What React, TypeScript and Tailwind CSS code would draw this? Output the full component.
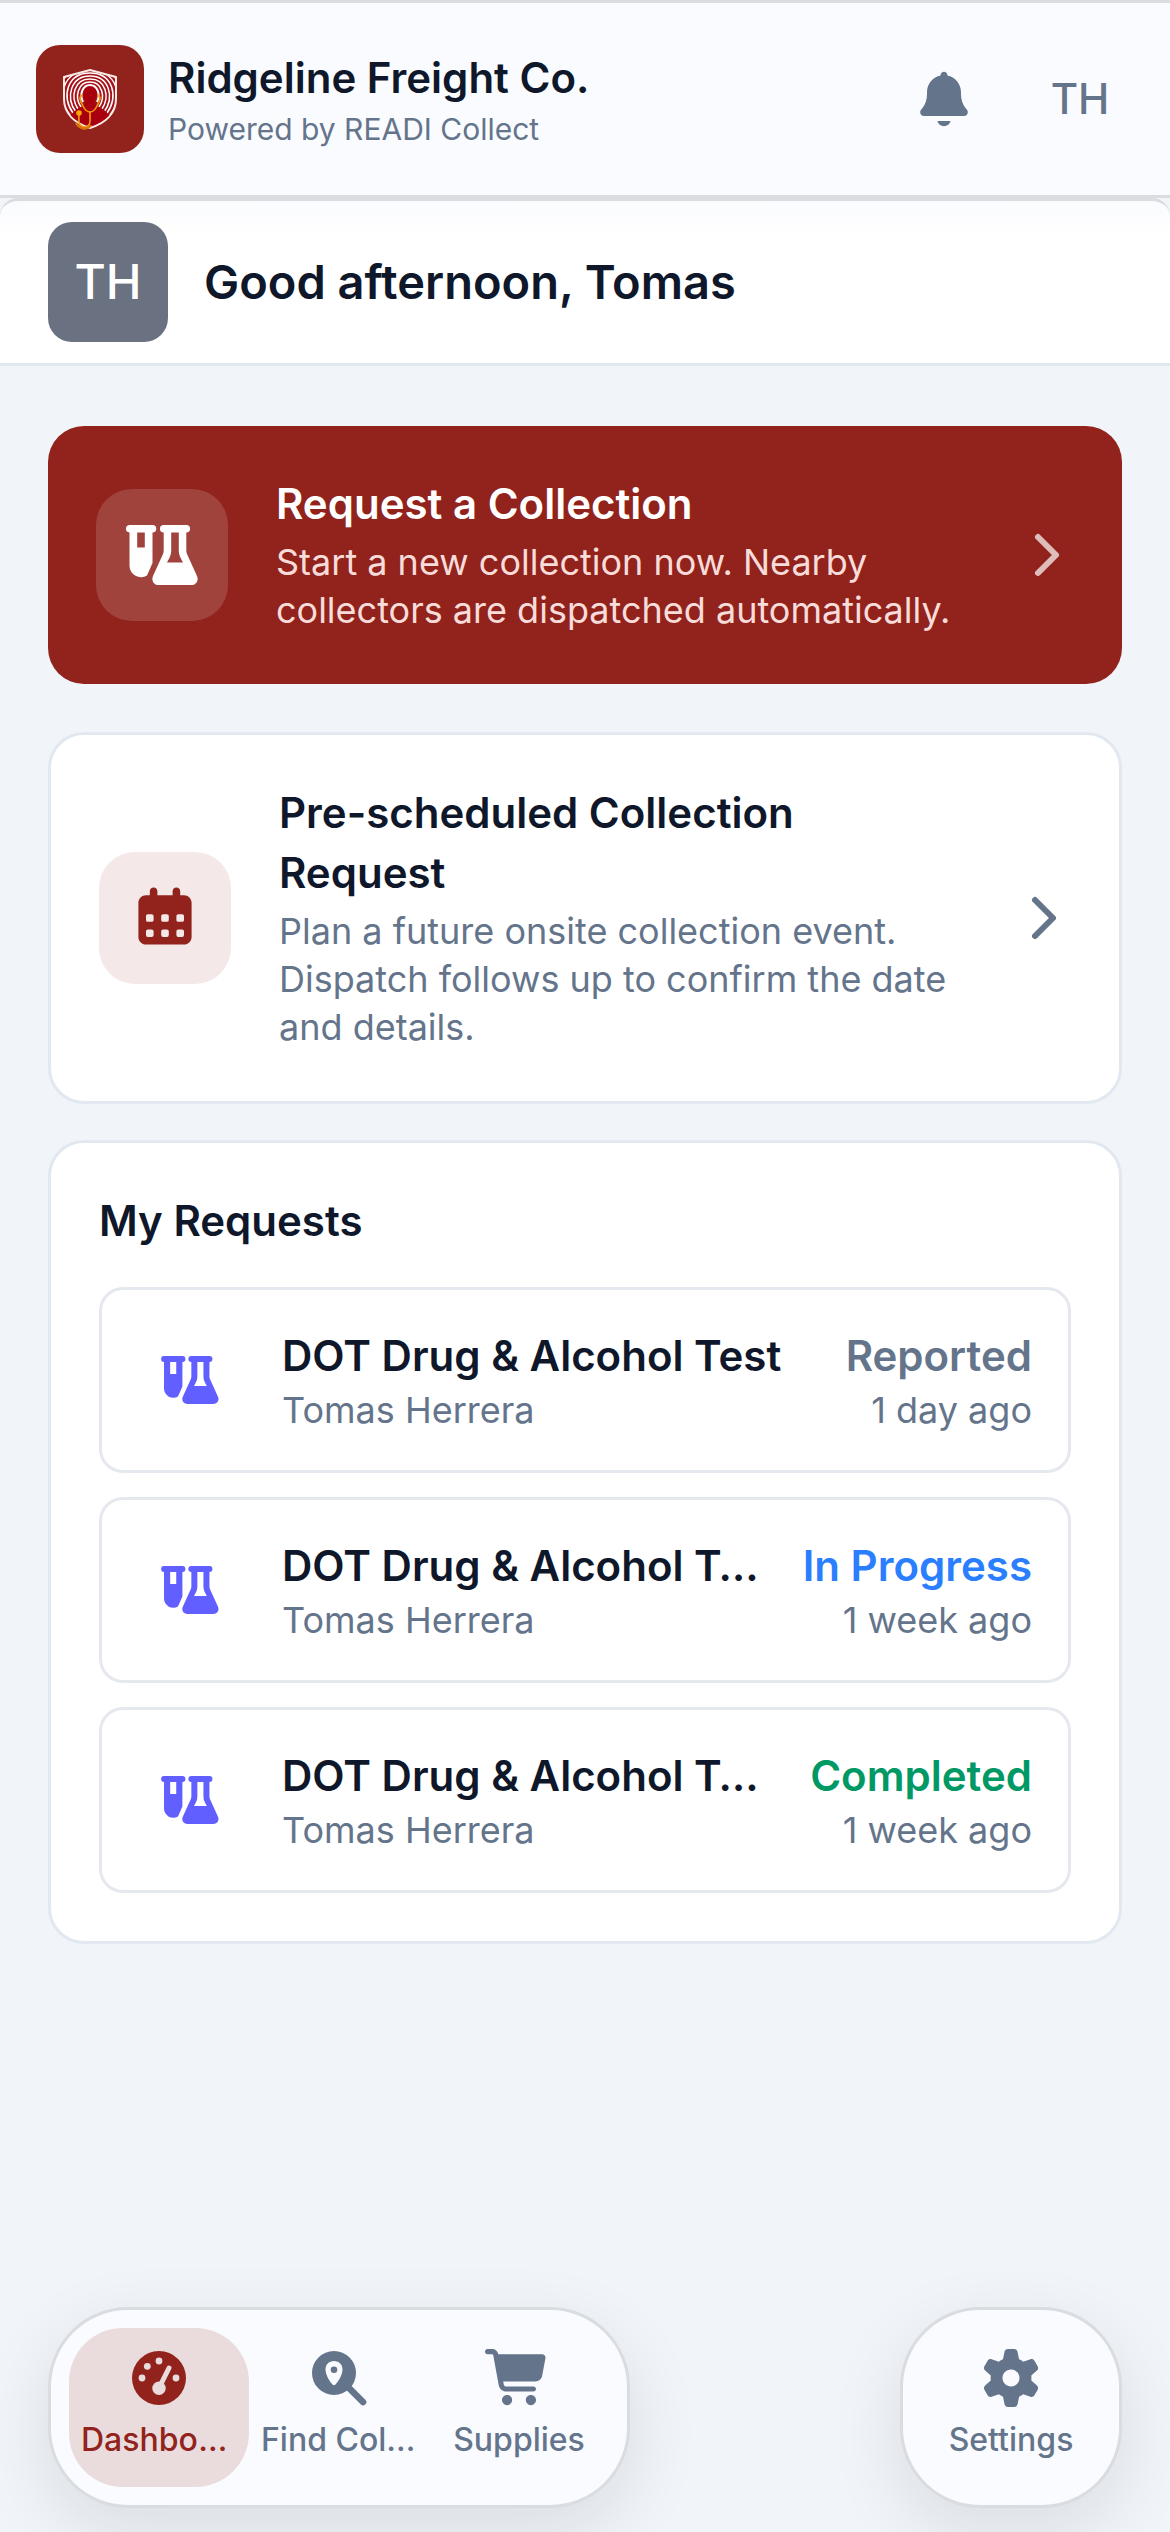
import { ReactNode } from "react";

interface IconProps {
  className?: string;
}

interface ActionCardProps {
  title: string;
  description: string;
  icon: ReactNode;
  primary?: boolean;
}

interface CollectionRequest {
  id: number;
  test: string;
  donor: string;
  status: string;
  statusColor: string;
  time: string;
}

interface NavItemProps {
  label: string;
  icon: ReactNode;
  active?: boolean;
}

const requests: CollectionRequest[] = [
  {
    id: 1,
    test: "DOT Drug & Alcohol Test",
    donor: "Tomas Herrera",
    status: "Reported",
    statusColor: "text-[#64748b]",
    time: "1 day ago",
  },
  {
    id: 2,
    test: "DOT Drug & Alcohol Test",
    donor: "Tomas Herrera",
    status: "In Progress",
    statusColor: "text-[#2b7fff]",
    time: "1 week ago",
  },
  {
    id: 3,
    test: "DOT Drug & Alcohol Test",
    donor: "Tomas Herrera",
    status: "Completed",
    statusColor: "text-[#009966]",
    time: "1 week ago",
  },
];

/* Icons */
const FlaskVialIcon = ({ className }: IconProps) => (
  <svg viewBox="0 0 72 60" fill="currentColor" fillRule="evenodd" className={className}>
    <path d="M3.75 0H26.5a3.75 3.75 0 0 1 0 7.5V38L21 50.5A11.5 11.5 0 0 1 3.5 41V7.5A3.75 3.75 0 0 1 3.75 0ZM11.2 7.5V22.5H18.8V7.5Z" />
    <path d="M37.7 0H60.3a3.75 3.75 0 0 1 0 7.5V25.5C60.3 27 60.6 28 61.2 29.5L71 51C73 55.5 70 60 65.5 60H32.5C28 60 25 55.5 27 51L36.8 29.5C37.4 28 37.7 27 37.7 25.5V7.5A3.75 3.75 0 0 1 37.7 0ZM45.2 7.5V25.5C45.2 28 44.7 30.3 43.6 32.6L41 37.5H57L54.4 32.6C53.3 30.3 52.8 28 52.8 25.5V7.5Z" />
  </svg>
);

const CalendarIcon = ({ className }: IconProps) => (
  <svg viewBox="0 0 640 640" fill="currentColor" className={className}>
    <path
      fillRule="evenodd"
      d="M224 64c17.7 0 32 14.3 32 32v32h128V96c0-17.7 14.3-32 32-32s32 14.3 32 32v32h32c35.3 0 64 28.7 64 64v288c0 35.3-28.7 64-64 64H160c-35.3 0-64-28.7-64-64V192c0-35.3 28.7-64 64-64h32V96c0-17.7 14.3-32 32-32zM176 288a16 16 0 0 0-16 16v32a16 16 0 0 0 16 16h32a16 16 0 0 0 16-16v-32a16 16 0 0 0-16-16zM304 288a16 16 0 0 0-16 16v32a16 16 0 0 0 16 16h32a16 16 0 0 0 16-16v-32a16 16 0 0 0-16-16zM432 288a16 16 0 0 0-16 16v32a16 16 0 0 0 16 16h32a16 16 0 0 0 16-16v-32a16 16 0 0 0-16-16zM176 416a16 16 0 0 0-16 16v32a16 16 0 0 0 16 16h32a16 16 0 0 0 16-16v-32a16 16 0 0 0-16-16zM304 416a16 16 0 0 0-16 16v32a16 16 0 0 0 16 16h32a16 16 0 0 0 16-16v-32a16 16 0 0 0-16-16zM432 416a16 16 0 0 0-16 16v32a16 16 0 0 0 16 16h32a16 16 0 0 0 16-16v-32a16 16 0 0 0-16-16z"
    />
  </svg>
);

const ChevronIcon = ({ className }: IconProps) => (
  <svg viewBox="0 0 54 54" fill="none" stroke="currentColor" className={className}>
    <path d="M18 9 36 27 18 45" strokeWidth="6" strokeLinecap="round" strokeLinejoin="round" />
  </svg>
);

const BellIcon = ({ className }: IconProps) => (
  <svg viewBox="0 0 640 640" fill="currentColor" className={className}>
    <path d="M320 64C302.3 64 288 78.3 288 96L288 99.2C215 114 160 178.6 160 256L160 277.7C160 325.8 143.6 372.5 113.6 410.1L103.8 422.3C98.7 428.6 96 436.4 96 444.5C96 464.1 111.9 480 131.5 480L508.4 480C528 480 543.9 464.1 543.9 444.5C543.9 436.4 541.2 428.6 536.1 422.3L526.3 410.1C496.4 372.5 480 325.8 480 277.7L480 256C480 178.6 425 114 352 99.2L352 96C352 78.3 337.7 64 320 64zM258 528C265.1 555.6 290.2 576 320 576C349.8 576 374.9 555.6 382 528L258 528z" />
  </svg>
);

const GaugeIcon = ({ className }: IconProps) => (
  <svg viewBox="-34 -34 68 68" className={className}>
    <circle r="27" fill="currentColor" />
    <g className="fill-[#eadcdd]">
      <circle cx="-17" r="3.4" />
      <circle cx="17" r="3.4" />
      <circle cy="-17" r="3.4" />
      <circle cx="-11.7" cy="-11.7" r="3.4" />
      <circle cy="10.2" r="6.7" />
    </g>
    <path d="M1 8 10 -10" className="stroke-[#eadcdd]" strokeWidth="5" strokeLinecap="round" />
  </svg>
);

const SearchLocationIcon = ({ className }: IconProps) => (
  <svg viewBox="-29 -29 68 68" fill="currentColor" className={className}>
    <path d="M12 12 29 29" stroke="currentColor" strokeWidth="6.7" strokeLinecap="round" />
    <path
      fillRule="evenodd"
      d="M0-22A22 22 0 1 1 0 22A22 22 0 1 1 0-22ZM0-12C-5-12-8.5-8.5-8.5-3.5C-8.5 2-4 9-1.5 11.5Q0 12.8 1.5 11.5C4 9 8.5 2 8.5-3.5C8.5-8.5 5-12 0-12Z"
    />
    <circle cy="-3.3" r="3.3" />
  </svg>
);

const CartIcon = ({ className }: IconProps) => (
  <svg viewBox="0 0 640 640" fill="currentColor" className={className}>
    <path d="M24 48C10.7 48 0 58.7 0 72C0 85.3 10.7 96 24 96L69.3 96C73.2 96 76.5 98.8 77.2 102.6L129.3 388.9C135.5 423.1 165.3 448 200.1 448L456 448C469.3 448 480 437.3 480 424C480 410.7 469.3 400 456 400L200.1 400C188.5 400 178.6 391.7 176.5 380.3L171.4 352L475 352C505.8 352 532.2 330.1 537.9 299.8L568.9 133.9C572.6 114.2 557.5 96 537.4 96L124.7 96L124.3 94C119.5 67.4 96.3 48 69.2 48L24 48zM208 576C234.5 576 256 554.5 256 528C256 501.5 234.5 480 208 480C181.5 480 160 501.5 160 528C160 554.5 181.5 576 208 576zM432 576C458.5 576 480 554.5 480 528C480 501.5 458.5 480 432 480C405.5 480 384 501.5 384 528C384 554.5 405.5 576 432 576z" />
  </svg>
);

const GearIcon = ({ className }: IconProps) => (
  <svg viewBox="0 0 640 640" fill="currentColor" className={className}>
    <path d="M259.1 73.5C262.1 58.7 275.2 48 290.4 48L350.2 48C365.4 48 378.5 58.7 381.5 73.5L396 143.5C410.1 149.5 423.3 157.2 435.3 166.3L503.1 143.8C517.5 139 533.3 145 540.9 158.2L570.8 210C578.4 223.2 575.7 239.8 564.3 249.9L511 297.3C511.9 304.7 512.3 312.3 512.3 320C512.3 327.7 511.8 335.3 511 342.7L564.4 390.2C575.8 400.3 578.4 417 570.9 430.1L541 481.9C533.4 495 517.6 501.1 503.2 496.3L435.4 473.8C423.3 482.9 410.1 490.5 396.1 496.6L381.7 566.5C378.6 581.4 365.5 592 350.4 592L290.6 592C275.4 592 262.3 581.3 259.3 566.5L244.9 496.6C230.8 490.6 217.7 482.9 205.6 473.8L137.5 496.3C123.1 501.1 107.3 495.1 99.7 481.9L69.8 430.1C62.2 416.9 64.9 400.3 76.3 390.2L129.7 342.7C128.8 335.3 128.4 327.7 128.4 320C128.4 312.3 128.9 304.7 129.7 297.3L76.3 249.8C64.9 239.7 62.3 223 69.8 209.9L99.7 158.1C107.3 144.9 123.1 138.9 137.5 143.7L205.3 166.2C217.4 157.1 230.6 149.5 244.6 143.4L259.1 73.5zM320.3 400C364.5 399.8 400.2 363.9 400 319.7C399.8 275.5 363.9 239.8 319.7 240C275.5 240.2 239.8 276.1 240 320.3C240.2 364.5 276.1 400.2 320.3 400z" />
  </svg>
);

/* Shield with fingerprint rings, a person and a stethoscope */
const Logo = ({ className }: IconProps) => (
  <svg viewBox="0 0 108 108" fill="none" className={className}>
    <clipPath id="shield">
      <path d="M54 25 80 32V54C80 68 70 78 54 83C38 78 28 68 28 54V32Z" />
    </clipPath>
    <g clipPath="url(#shield)">
      <path d="M54 25 80 32V54C80 68 70 78 54 83C38 78 28 68 28 54V32Z" fill="#a5121a" />
      <g stroke="#fff" strokeWidth="1.5">
        <path d="M47 57C43 49 47 40 54 40S65 49 61 57" strokeWidth="2" />
        <path d="M45 62C38 52 42 37 54 37S70 52 63 62" />
        <path d="M42 64C34 52 38 34 54 34S74 52 66 64" />
        <path d="M40 67C29 52 35 31 54 31S79 52 68 67" />
        <path d="M37 68C25 52 31 28 54 28S83 52 71 68" />
        <path d="M34 70C20 52 27 25 54 25S88 52 74 70" />
        <path d="M31 71C15 52 23 22 54 22S93 52 77 71" />
      </g>
      <path d="M34 73C37 65 43 63 48 61L50 56C45 50 47 42 54 42S63 50 58 56L60 61C65 63 71 65 74 73L66 84H42Z" fill="#a8000f" />
    </g>
    <path d="M54 25 80 32V54C80 68 70 78 54 83C38 78 28 68 28 54V32Z" stroke="#fbe9e4" strokeWidth="2" strokeLinejoin="round" />
    <g stroke="#f59a0b" strokeWidth="1.6" strokeLinecap="round">
      <path d="M46 50C42 53 45 57 47 61C49 65 51 67 54 67S59 65 61 61C63 57 66 53 62 50" />
      <path d="M54 67V76C54 82 47 84 44 80C42 77 43 74 43 69" />
    </g>
    <path d="M40 78C44 85 52 85 55 80" stroke="#d9740c" strokeWidth="2.4" />
    <circle cx="43" cy="68" r="2.8" fill="#fba70a" />
  </svg>
);

const ActionCard = ({ title, description, icon, primary }: ActionCardProps) => {
  return (
    <button
      type="button"
      className={`flex w-full items-center gap-12 rounded-[36px] p-12 text-left ${
        primary ? "bg-[#91231c] text-white" : "border-3 border-[#e2e8f0] bg-white text-[#0f172a]"
      }`}
    >
      <span
        className={`flex size-33 shrink-0 items-center justify-center rounded-[36px] ${
          primary ? "bg-white/15" : "bg-[#f4e9e8] text-[#91231c]"
        }`}
      >
        {icon}
      </span>
      <span className="flex min-w-0 flex-1 flex-col gap-1 pb-0.5">
        <span className="text-[42px] leading-15 font-semibold">{title}</span>
        <span className={`text-[36px] leading-12 ${primary ? "text-[#f8dcda]" : "text-[#64748b]"}`}>
          {description}
        </span>
      </span>
      <ChevronIcon className={`size-13.5 shrink-0 ${primary ? "text-[#debdbb]" : "text-[#64748b]"}`} />
    </button>
  );
};

const RequestRow = ({ request }: { request: CollectionRequest }) => {
  return (
    <li>
      <a
        href="#request"
        className="flex items-center gap-10 rounded-3xl border-3 border-[#e5e8ee] p-9"
      >
        <span className="flex w-26 shrink-0 justify-center text-[#615fff]">
          <FlaskVialIcon className="h-12 w-[58px]" />
        </span>
        <span className="flex min-w-0 flex-1 flex-col">
          <span className="flex gap-9 text-[42px] leading-15 font-semibold">
            <span className="flex-1 truncate text-[#0f172a]">{request.test}</span>
            <span className={request.statusColor}>{request.status}</span>
          </span>
          <span className="flex justify-between text-[36px] leading-12 text-[#64748b]">
            <span>{request.donor}</span>
            <span>{request.time}</span>
          </span>
        </span>
      </a>
    </li>
  );
};

const NavItem = ({ label, icon, active }: NavItemProps) => {
  return (
    <a
      href="#nav"
      className={`flex w-45 flex-col items-center gap-2 rounded-[54px] px-3 pt-4 pb-[27px] ${
        active ? "bg-[#eadcdd] text-[#91231c]" : "text-[#64748b]"
      }`}
    >
      {icon}
      <span className="max-w-full truncate text-[32px] leading-10 font-medium">{label}</span>
    </a>
  );
};

const App = () => {
  return (
    <div className="flex min-h-screen flex-col bg-[#f1f5f9] font-['Inter',sans-serif]">
      {/* Top bar */}
      <header className="flex items-center gap-6 border-y-3 border-[#dadde0] bg-[#f9fbff] px-9 py-[42px]">
        <div className="size-27 shrink-0 rounded-3xl bg-[#91231c]">
          <Logo className="size-full" />
        </div>
        <div className="min-w-0 flex-1 pt-1.5">
          <p className="text-[42px] leading-[54px] font-semibold text-[#0f172a]">Ridgeline Freight Co.</p>
          <p className="text-[30px] leading-12 text-[#64748b]">Powered by READI Collect</p>
        </div>
        <div className="flex gap-7 text-[#64748b]">
          <button type="button" aria-label="Notifications" className="flex size-27 items-center justify-center">
            <BellIcon className="size-[68px]" />
          </button>
          <button type="button" className="size-27 rounded-full text-[42px] leading-15 font-medium">
            TH
          </button>
        </div>
      </header>

      {/* Greeting */}
      <section className="flex items-center gap-9 rounded-t-[18px] border-y-3 border-t-[#dadde0] border-b-[#e2e8f0] bg-linear-to-b from-[#fafbfe] to-white to-20% px-12 py-[21px]">
        <div className="flex size-30 items-center justify-center rounded-3xl bg-[#6a7282] text-[48px] font-medium text-white">
          TH
        </div>
        <h1 className="text-[47px] leading-15 font-semibold text-[#0f172a]">Good afternoon, Tomas</h1>
      </section>

      <main className="flex-1 px-12 py-15">
        <div className="flex flex-col gap-12">
          <ActionCard
            primary
            title="Request a Collection"
            description="Start a new collection now. Nearby collectors are dispatched automatically."
            icon={<FlaskVialIcon className="h-15 w-18" />}
          />
          <ActionCard
            title="Pre-scheduled Collection Request"
            description="Plan a future onsite collection event. Dispatch follows up to confirm the date and details."
            icon={<CalendarIcon className="size-19" />}
          />
        </div>

        {/* Requests */}
        <section className="mt-9 rounded-[36px] border-3 border-[#e2e8f0] bg-white p-12">
          <h2 className="text-[42px] leading-15 font-semibold text-[#0f172a]">My Requests</h2>
          <ul className="mt-9 flex flex-col gap-6">
            {requests.map((request) => (
              <RequestRow key={request.id} request={request} />
            ))}
          </ul>
        </section>
      </main>

      {/* Bottom navigation */}
      <nav className="sticky bottom-0 flex justify-between px-12 pb-6">
        <div className="flex rounded-[80px] border-3 border-[#d9dde1] bg-[#f9fbff] p-[18px] shadow-[0_24px_72px_rgba(15,23,42,0.1)]">
          <NavItem active label="Dashboard" icon={<GaugeIcon className="size-17" />} />
          <NavItem label="Find Collector" icon={<SearchLocationIcon className="size-17" />} />
          <NavItem label="Supplies" icon={<CartIcon className="size-17" />} />
        </div>
        <div className="flex rounded-[80px] border-3 border-[#d9dde1] bg-[#f9fbff] p-[18px] shadow-[0_24px_72px_rgba(15,23,42,0.1)]">
          <NavItem label="Settings" icon={<GearIcon className="size-17" />} />
        </div>
      </nav>
    </div>
  );
};

export default App;
